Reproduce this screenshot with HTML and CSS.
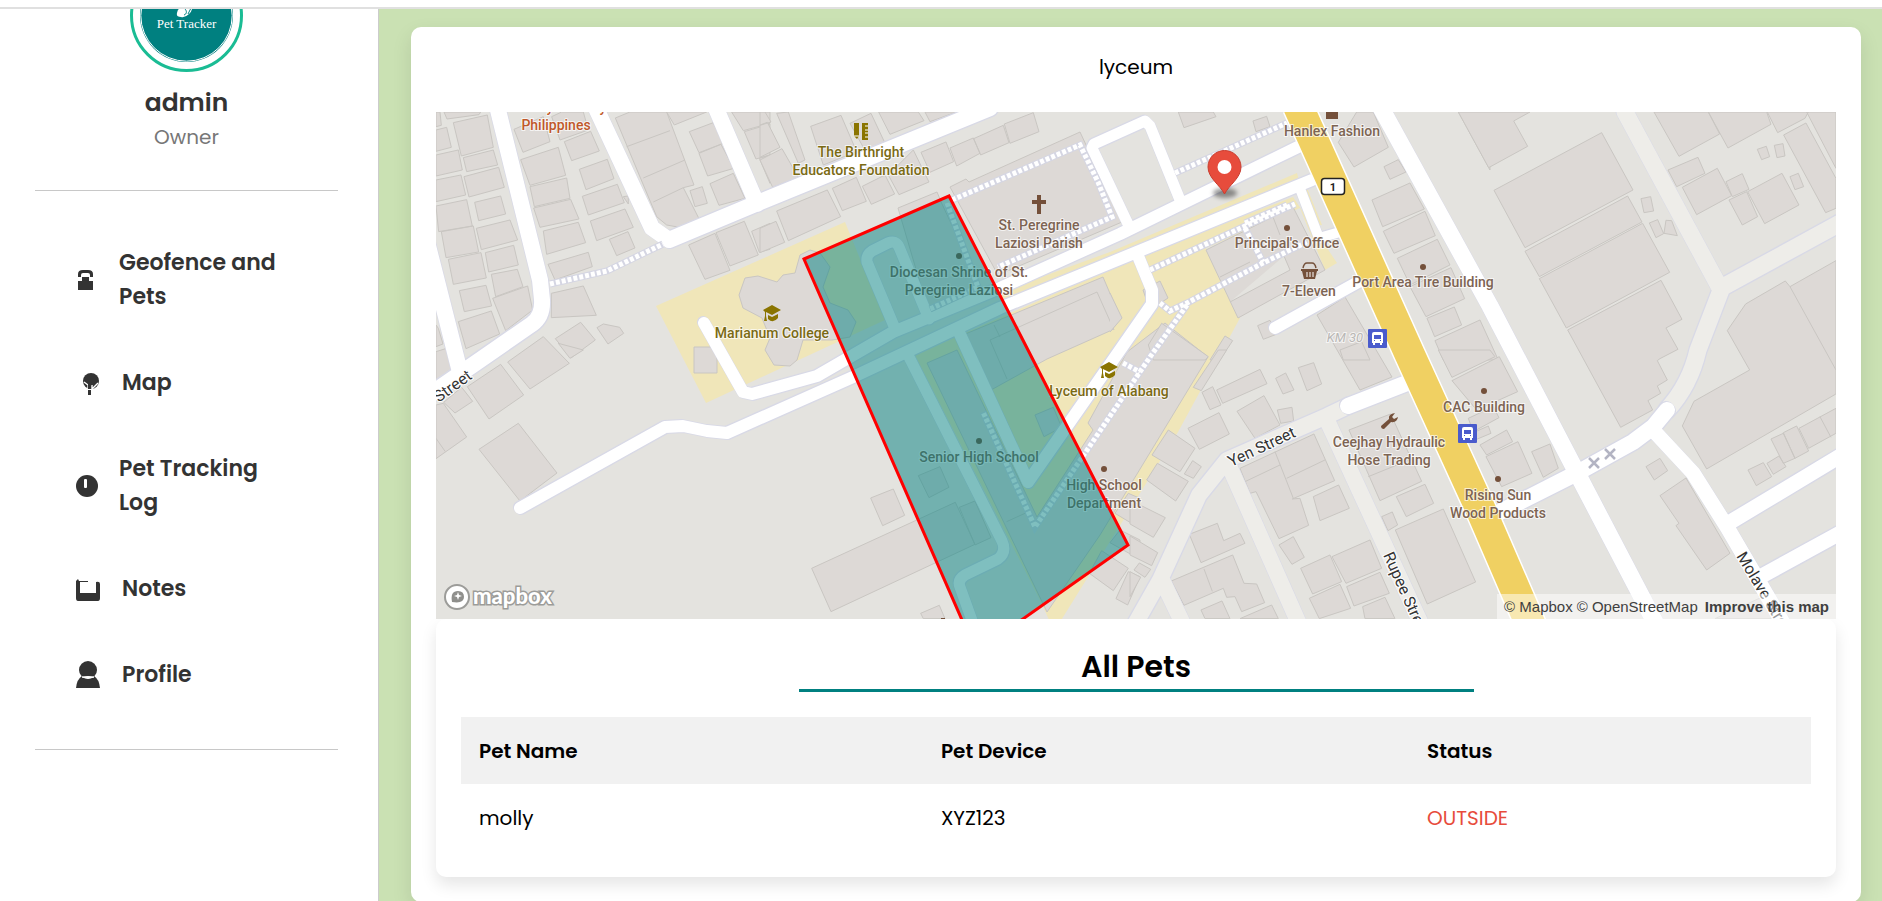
FILE: index.html
```html
<!DOCTYPE html>
<html lang="en">

<head>
  <title>Pet Tracker</title>

  <meta charset="UTF-8">
  <meta name="viewport" content="width=device-width, initial-scale=1">

  <link rel="stylesheet" href="styles.css">
</head>
<body>

  <header class="topbar"></header>

  <div class="layout">

    <aside class="sidebar">
      <svg class="avatar" viewBox="0 50 113 63" role="img" aria-label="Pet Tracker">
        <circle cx="56.5" cy="56.5" r="55" fill="#fff" stroke="#1abc94" stroke-width="3"/>
        <circle cx="56.5" cy="56.5" r="46.5" fill="#008080"/>
        <circle cx="56.5" cy="56.5" r="45.7" fill="none" stroke="#fff"/>
        <path d="M47 54q1-5 4-5l3-4h8q1 7-3 10-4 4-8 3-5 0-4-4z" fill="#fff"/>
        <path d="M54 56c3-1 3-4 1-6M58 55l3-6" fill="none" stroke="#008080"/>
        <text x="56.5" y="69" text-anchor="middle" class="avatar-text">Pet Tracker</text>
      </svg>
      <h2 class="user-name">admin</h2>
      <p class="user-role">Owner</p>

      <hr>

      <nav class="menu">
        <a href="#geofence" class="two-line">
          <svg viewBox="0 0 24 28"><path d="M2 11V8q0-4 5-4h5q5 0 5 4v3h-3V9q0-2-2-2H7Q5 7 5 9v2zM6 11h7v4h4v9H2v-9h4z"/></svg>
          <span>Geofence and Pets</span>
        </a>
        <a href="#map">
          <svg viewBox="0 0 24 28"><circle cx="15" cy="12" r="8"/><path d="M8 13l4 3v4M22 14l-4 4-2 2v-4" fill="none" stroke="#fff" stroke-width="1.4"/><path d="M12 13h4l-1 4v3h-3zM12 21h3v5h-3z"/></svg>
          <span>Map</span>
        </a>
        <a href="#log" class="two-line">
          <svg viewBox="0 0 24 28"><circle cx="11" cy="14" r="11"/><rect x="8" y="7" width="3" height="9" rx="1" fill="#fff"/></svg>
          <span>Pet Tracking Log</span>
        </a>
        <a href="#notes">
          <svg viewBox="0 0 24 28"><path d="M0 6l2-2 1 2h9v1H4v11h16V7q4-1 4 2v14q0 3-2 3H2q-2 0-2-3z"/></svg>
          <span>Notes</span>
        </a>
        <a href="#profile">
          <svg viewBox="0 0 24 28"><circle cx="12" cy="9" r="9"/><path d="M0 27q1-9 6-12h12q5 3 6 12z"/><path d="M6 16q6 3 12 0q-6-1-12 0" fill="#fff" stroke="#fff"/></svg>
          <span>Profile</span>
        </a>
      </nav>

      <hr>
    </aside>

    <main class="content">
      <section class="card">
        <p class="fence-name">lyceum</p>

        <div class="map">
          <svg class="map-canvas" viewBox="436 112 1400 507" preserveAspectRatio="xMidYMid slice">
            <defs>
              <g id="pale">
                <path d="M1625 112L1721 290L1698 350Q1690 385 1667 410M1721 288L1842 222" stroke-width="17"/>
                <path d="M1350 405L1327 416L1227 460L1199 495L1160 580L1134 626M1230 468L1300 626M1326 418L1422 626M1162 580L1184 626" stroke-width="16"/>
              </g>
              <g id="streets">
                <path d="M497 106L540 280L542 300Q543 316 532 324L428 396M424 230L460 372" stroke-width="16"/>
                <path d="M595 106L652 228L669 240L760 202L990 108M715 106L757 204" stroke-width="16"/>
                <path d="M704 323L743 392L752 394L817 376L893 332L1000 288L1120 234L1300 146" stroke-width="12"/>
                <path d="M520 508L665 427L683 426L707 431L727 433L853 377L1000 308L1110 263L1312 180" stroke-width="12"/>
                <path d="M896 331L867 262Q866 255 872 251L888 243Q896 240 899 247L929 319" stroke-width="11"/>
                <path d="M907 353L1002 541Q1007 552 998 559L965 575Q957 580 960 587L974 626" stroke-width="11"/>
                <path d="M958 330L1028 482L1120 350L1152 304V290L1138 256" stroke-width="12"/>
                <path d="M1128 224L1092 148L1094 144L1145 121L1150 126L1180 200" stroke-width="11"/>
                <path d="M1299 186L1319 238L1340 232" stroke-width="10"/>
                <path d="M1275 328L1360 281" stroke-width="12"/>
                <path d="M1348 406L1407 383" stroke-width="16"/>
                <path d="M1380 106L1490 306L1577 473L1658 628" stroke-width="17"/>
                <path d="M1500 512L1577 473L1633 442L1653 427L1667 410" stroke-width="16"/>
                <path d="M1653 430L1693 473L1727 527L1786 628M1727 524L1842 455M1758 578L1842 532" stroke-width="15"/>
              </g>
              <g id="footways">
                <path d="M550 284L607 271L663 244"/>
                <path d="M952 200L1080 145L1098 182L1112 217L998 267M947 203L978 287L930 309"/>
                <path d="M1175 173L1287 123"/>
                <path d="M1150 270L1243 227L1295 204M1245 223L1287 205M1245 228L1263 262"/>
                <path d="M1160 303L1170 311L1187 303L1263 263L1307 242"/>
                <path d="M1187 305L1150 357L1035 527L983 412M1123 363L1140 372"/>
              </g>
              <g id="cap" fill="#8a7400">
                <path d="M0 5L9 0l9 5-9 5-6-3v4l1 5H1l1-5V7z"/>
                <path d="M5 10l4 2 6-3v4q-5 6-10 1z"/>
              </g>
              <g id="bus">
                <rect width="19" height="19" rx="1" fill="#4a5bcc"/>
                <path d="M4 5q0-2 2-2h7q2 0 2 2v9h-1v2h-2v-2H7v2H5v-2H4z" fill="#fff"/>
                <path d="M6 6h7v4H6zM6 11h1v1H6zM12 11h1v1h-1z" fill="#4a5bcc"/>
              </g>
            </defs>

            <rect x="436" y="112" width="1400" height="507" fill="#e4e3df"/>

            <!-- school grounds -->
            <g fill="#f0e6b9">
              <path d="M656 306L845 222L885 320L706 403z"/>
              <path d="M1000 292L1110 252L1297 173L1299 181L1000 306z"/>
              <path d="M915 355L1143 255L1293 197L1337 263L1325 270L1300 208L1206 248L1240 318L1178 432L1060 622H1050L1040 600z"/>
              <path d="M1303 190L1307 188L1322 225H1318z"/>
            </g>

            <!-- buildings -->
            <g class="buildings">
              <path d="M745 278L758 276L777 282L783 275L795 273L800 255L810 250L820 253L830 267L823 287L830 303L848 310L856 322L850 337L832 340H803L797 360L790 366L774 365L765 350L770 338L762 318L743 308L739 295z"/>
              <path d="M694 347H717V373H694z"/>
              <path d="M898 208L937 192L942 204L980 285L928 310z"/>
              <path d="M950 187L966 179L969 182L1080 132L1122 222L998 275z"/>
              <path d="M963 335L1103 277L1120 317L1112 330L1047 359L991 390zM990 340L1097 292L1114 330M990 340L1007 379M994 325L1000 337"/>
              <path d="M927 363L957 350L1037 517L1093 430L1088 423L1127 352L1165 323L1208 357L1100 535L1047 612z"/>
              <path d="M1206 250L1293 207L1325 270L1238 318zM1220 277L1250 262M1230 302L1290 270L1284 256M1273 217L1280 235"/>
              <path d="M1110 293L1122 318L1110 332M1143 290L1160 281L1168 298L1150 310z"/>
              <path d="M1317 315L1345 297L1392 377L1360 390z"/>
            </g>
            <g class="buildings" transform="translate(410 90) scale(.3333)">
              <path d="M78 66h12l4 40-16 4zM102 66h110l-5 8-96 13zM130 98L232 75L250 172L154 198zM78 120L110 112L124 172L78 184zM78 195L145 180L157 240L78 258zM160 203L250 180L263 225L170 245zM78 270L153 255L167 315L78 335z"/>
              <path d="M162 260L266 232L283 292L177 321zM194 337L272 318L287 372L206 392zM78 348L170 329L187 408L86 425zM94 425L190 408L206 486L108 503zM199 415L300 390L323 450L214 479zM226 488L311 466L325 525L236 546zM115 508L213 488L229 564L130 583z"/>
              <path d="M244 553L322 538L339 590L257 620zM248 625L353 588L368 660L287 722zM148 602L228 586L245 648L163 665zM145 695L244 663L269 732L168 776zM78 705L85 715L99 762L78 770z"/>
              <path d="M312 118L400 80L420 155L339 187zM332 209L445 172L467 256L360 286zM360 290L470 264L480 325L373 350zM371 354L482 328L507 387L390 412zM400 423L505 397L527 458L410 493zM414 523L535 487L547 530L435 570z"/>
              <path d="M425 80L450 150L535 120L520 66H455zM463 155L542 124L568 183L485 212zM508 238L592 208L612 266L528 299zM517 319L622 283L643 338L535 375zM541 393L645 357L670 412L560 452zM598 448L654 425L675 474L620 497zM640 320L655 318V342z"/>
              <path d="M616 84L660 66H770L852 285L820 293L867 386L808 412L770 405L740 380zM650 170L780 122M700 264L825 210M730 336L820 293"/>
              <path d="M770 66H890L793 105zM838 125L910 98L940 160L867 188zM867 190L933 163L972 235L893 258zM900 281L970 250L1005 325L927 346zM840 302L877 290L892 340L855 350z"/>
              <path d="M965 66H1080V100L1000 122zM1003 125L1080 102V195L1038 207zM1048 205L1080 195V280zM836 465L915 430L960 541L885 568zM918 428L1003 394L1045 495L960 528zM1025 424L1080 400V478L1048 487z"/>
              <path d="M424 610L520 588L559 676L424 683zM436 746L512 697L556 750L483 804zM561 713L580 702L629 712L641 730L594 762z"/>
            </g>
            <g class="buildings" transform="translate(410 350) scale(.3333)">
              <path d="M293 36L400 -40L478 40L360 117zM445 -20L480 25L520 0zM172 110L272 43L341 135L237 207zM101 157L155 112L188 154L135 189zM78 165L100 160L170 261L78 326zM78 265L106 305M207 298L325 220L441 369L330 453zM78 5L110 -5L125 62L78 90z"/>
            </g>
            <g class="buildings" transform="translate(760 90) scale(.3333)">
              <path d="M0 66h15l18 30-33 10zM0 105l22-8 38 75-60 30zM0 210L66 176L115 262L38 292zM50 70L85 66L135 210L115 220zM152 109L243 76L290 185L190 225zM270 100L333 70L380 170L320 190zM356 66H475L492 92L390 133zM495 66H590L510 95z"/>
              <path d="M50 363L202 300L242 380L85 452zM0 415L48 394L74 457L0 488zM217 295L289 262L319 334L247 362zM307 289L375 255L404 312L334 343zM385 255L460 180L507 276L417 314zM483 187L558 156L581 215L510 247zM570 174L640 144L660 190L590 228zM641 146L730 106L747 158L662 195zM733 102L820 68L837 125L750 160z"/>
            </g>
            <g class="buildings" transform="translate(760 350) scale(.3333)">
              <path d="M332 444L400 417L434 496L368 527zM155 655L586 457L645 583L213 785zM598 472L645 453L693 563L645 585zM475 377L540 350L567 412L507 443zM482 790L538 766L555 806H490zM825 195L880 172L905 232L852 260zM1105 430L1065 490L1140 535V445zM1080 540L1050 578L1140 628V570zM1025 602L988 670L1060 722L1105 655zM1105 665L1068 746L1103 765L1140 680zM740 515L795 490"/>
            </g>
            <g class="buildings" transform="translate(1110 90) scale(.3333)">
              <path d="M205 66H310L318 80L222 113zM429 93L470 79L480 110L438 125zM685 157L740 66H790L835 172L732 231zM822 230L865 209L888 246L840 268zM786 330L900 279L943 357L818 410zM820 424L945 364L976 437L852 490zM862 505L982 448L1020 525L900 585zM900 590L1023 533L1064 626L948 680zM951 685L1033 651L1055 705L974 740z"/>
              <path d="M975 752L1110 690L1165 810H1000zM1045 66H1140V240zM443 707L480 691L499 733L460 748zM690 780L755 755L780 810H700zM115 765L155 700L295 800L285 810H130zM300 810L345 738L368 752L330 810z"/>
            </g>
            <g class="buildings" transform="translate(1130 350) scale(.3333)">
              <path d="M190 112L265 0H290L214 122zM216 127L248 110L273 165L240 179zM260 120L390 58L411 101L278 160zM437 85L467 69L492 120L459 132zM505 53L551 38L575 102L531 122zM321 184L402 137L450 225L375 265zM442 180L486 172L491 213L452 220zM174 235L267 188L298 252L208 298z"/>
              <path d="M66 315L115 240L195 295L150 365zM50 390L82 340L175 394L137 453zM163 372L188 332L214 350L190 385zM0 450L106 503L70 562L0 522zM0 558L83 608L65 647L0 615zM12 660L28 639L62 658L45 682zM0 665L32 682L0 740z"/>
              <path d="M330 355L552 252L614 392L487 447L510 445L536 526L447 566L378 425L360 430zM345 395L450 345M435 305L490 445M470 385L585 330M550 440L626 405L658 475L570 512zM447 585L490 560L523 622L486 643z"/>
              <path d="M178 553L262 520L281 572L330 550L345 580L213 638zM124 693L308 615L342 700L380 702L404 758L335 785L315 740L290 742L280 715L162 766zM222 657L247 724M213 780L276 753L300 806H225zM330 806L425 765L445 806z"/>
              <path d="M512 655L600 615L635 695L548 732zM606 620L720 570L755 655L648 700zM538 745L630 703L662 775L568 806zM650 710L750 667L778 730L672 768zM698 770L765 742L795 806H705zM657 240L782 192L875 394L750 452zM715 380L850 325M799 440L885 403L911 460L829 500zM755 500L787 486L803 525L774 542zM796 540L940 477L1037 696L892 762z"/>
              <path d="M925 0H1080L1095 20L966 82zM966 92L1108 20L1163 125L1040 180zM1015 205L1090 170L1107 203L1030 245zM1030 248L1075 228L1083 250L1040 268zM1050 285L1130 240L1148 275L1070 315zM1068 320L1164 275L1206 370L1115 410zM1205 305L1260 282L1285 355L1240 382z"/>
            </g>
            <g class="buildings" transform="translate(1480 90) scale(.3333)">
              <path d="M-65 66H150L101 93L143 169L26 233zM42 301L365 128L459 300L135 473zM135 484L443 318L486 396L178 560zM178 566L488 400L569 547L259 714zM263 720L543 571L606 688L558 714L594 778L540 806L532 812L562 870L532 888L542 910L504 932L518 960L422 1012z"/>
              <path d="M522 66H685L719 132L597 199zM685 66H860L873 103L744 174zM862 66H985L975 85L893 128zM980 66H1068V235zM911 135L978 99L1068 265V355L1037 368zM564 240L654 202L675 250L590 290zM607 292L712 235L755 317L650 374zM738 275L787 251L807 298L757 320zM747 330L800 305L833 380L787 405zM803 305L906 250L957 345L854 401z"/>
              <path d="M832 178L859 169L869 200L845 209zM883 166L909 161L915 198L891 203zM930 260L955 250L971 290L945 299zM483 326L512 320L521 363L492 368zM508 399L533 389L551 431L528 443zM558 391L575 392L592 437L552 430z"/>
              <path d="M797 642L916 573L930 590L1068 512V912L680 1137L607 1008L642 934L809 840L742 722zM930 590L1068 840"/>
            </g>
            <g class="buildings" transform="translate(1480 350) scale(.3333)">
              <path d="M498 350L540 325L563 362L523 390zM540 437L618 384L750 610L680 660L588 527L597 520zM804 360L850 338L875 380L829 407zM861 340L897 318L918 350L880 373zM873 267L910 250L945 325L910 340zM910 248L950 228L986 303L945 325zM957 235L1068 175V250L986 295zM1020 200L1053 262M705 806L860 735L890 806z"/>
            </g>

            <use href="#pale" class="line casing"/>
            <use href="#pale" class="line pale"/>
            <use href="#streets" class="line casing"/>
            <use href="#streets" class="line street"/>
            <use href="#footways" class="footway-casing"/>
            <use href="#footways" class="footway"/>

            <path d="M1298 106L1410 355L1480 508L1532 628" fill="none" stroke="#fff" stroke-width="33"/>
            <path d="M1298 106L1410 355L1480 508L1532 628" fill="none" stroke="#f0d062" stroke-width="30"/>

            <!-- places -->
            <g class="label food">
              <text x="550" y="112">y</text>
              <text x="603" y="112">y</text>
              <text x="556" y="130">Philippines</text>
            </g>
            <g class="label school">
              <text x="861" y="157">The Birthright</text>
              <text x="861" y="175">Educators Foundation</text>
              <text x="772" y="338">Marianum College</text>
              <text x="1109" y="396">Lyceum of Alabang</text>
            </g>
            <g class="label place">
              <text x="1039" y="230">St. Peregrine</text>
              <text x="1039" y="248">Laziosi Parish</text>
              <text x="959" y="277">Diocesan Shrine of St.</text>
              <text x="959" y="295">Peregrine Laziosi</text>
              <text x="979" y="462">Senior High School</text>
              <text x="1104" y="490">High School</text>
              <text x="1104" y="508">Department</text>
              <text x="1332" y="136">Hanlex Fashion</text>
              <text x="1287" y="248">Principal's Office</text>
              <text x="1309" y="296">7-Eleven</text>
              <text x="1423" y="287">Port Area Tire Building</text>
              <text x="1484" y="412">CAC Building</text>
              <text x="1389" y="447">Ceejhay Hydraulic</text>
              <text x="1389" y="465">Hose Trading</text>
              <text x="1498" y="500">Rising Sun</text>
              <text x="1498" y="518">Wood Products</text>
            </g>
            <text class="label km" x="1345" y="342">KM 30</text>
            <g class="street-name">
              <text transform="translate(473 378) rotate(-36)" text-anchor="end">Street</text>
              <text transform="translate(1231 467) rotate(-25)">Yen Street</text>
              <text transform="translate(1383 555) rotate(66)">Rupee Street</text>
              <text transform="translate(1736 556) rotate(59)">Molave Street</text>
            </g>
            <g class="dots">
              <circle cx="959" cy="256" r="3"/><circle cx="979" cy="441" r="3"/><circle cx="1104" cy="469" r="3"/>
              <circle cx="1287" cy="228" r="3"/><circle cx="1423" cy="267" r="3"/><circle cx="1484" cy="391" r="3"/>
              <circle cx="1498" cy="479" r="3"/>
              <rect x="1326" y="112" width="12" height="7"/>
              <path d="M1037 195h4v5h5v4h-5v10h-4v-10h-5v-4h5z"/>
              <path d="M1301 269h17v2h-1l-2 8h-11l-2-8h-1zM941 618h4v2h-4z"/>
              <path d="M1303 268q1-5 4-5h5q3 0 4 5" fill="none" stroke="#74503a" stroke-width="1.5"/>
              <path d="M1307 272v5M1310 272v5M1313 272v5" fill="none" stroke="#fff"/>
              <path d="M1381 426l8-7q-1-5 6-6l-3 4 2 2 4-2q-1 6-7 5l-7 7q-3 0-3-3z"/>
            </g>
            <use href="#cap" x="763" y="305"/>
            <use href="#cap" x="1100" y="362"/>
            <path d="M854 123h5v13l-2 3-3-3zM862 123h6v17h-6z" fill="#8a7400"/>
            <path d="M854 136h5M865 126h3M865 130h3M865 133h3M865 137h3" stroke="#fff"/>
            <use href="#bus" x="1368" y="329"/>
            <use href="#bus" x="1458" y="424"/>
            <rect x="1321.5" y="178.5" width="23" height="16" rx="3" fill="#fff" stroke="#222" stroke-width="1.5"/>
            <text x="1333" y="191" class="shield">1</text>
            <path d="M1589 458l10 10M1599 458l-10 10M1605 449l10 10M1615 449l-10 10" stroke="#b3b4c3" stroke-width="2.5"/>

            <path class="geofence" d="M804 259L949 196L1128 545L976 652z"/>

            <!-- pet marker -->
            <ellipse cx="1225" cy="193" rx="12" ry="5" class="marker-shadow"/>
            <path d="M1224.500 194C1220 185 1208 178 1208 167a16.500 16.500 0 0 1 33 0c0 11-12 18-16.500 27z" fill="#e74c3c" stroke="#c93e30"/>
            <circle cx="1224.500" cy="167" r="7" fill="#fff"/>
          </svg>

          <a class="map-logo" href="#mapbox" aria-label="Mapbox">
            <svg viewBox="0 0 112 28">
              <circle cx="13" cy="14" r="12" fill="#fff" stroke="#9c9c99" stroke-width="2"/>
              <path d="M8 19q-2-11 6-11 6 0 6 6 0 7-12 5z" fill="#8f8f8c"/>
              <path d="M14 9l1 3 3 1-3 1-1 3-1-3-3-1 3-1z" fill="#fff"/>
              <text x="29" y="21">mapbox</text>
            </svg>
          </a>
          <div class="map-credit">
            <a href="#mapbox-about">© Mapbox</a>
            <a href="#osm">© OpenStreetMap</a>
            <a href="#improve" class="improve">Improve this map</a>
          </div>
        </div>

        <div class="pets">
          <h2>All Pets</h2>
          <table>
            <thead>
              <tr>
                <th>Pet Name</th>
                <th>Pet Device</th>
                <th>Status</th>
              </tr>
            </thead>
            <tbody>
              <tr>
                <td>molly</td>
                <td>XYZ123</td>
                <td class="outside">OUTSIDE</td>
              </tr>
            </tbody>
          </table>
        </div>
      </section>
    </main>

  </div>

</body>
</html>
```

FILE: styles.css
```css
* {
  box-sizing: border-box;
  margin: 0;
  padding: 0;
}

body {
  height: 100vh;
  overflow: hidden;
  display: flex;
  flex-direction: column;
  font-family: Poppins, Inter, sans-serif;
  font-size: 20px;
  color: #000;
  background: #cae1b3;
}

a {
  color: inherit;
  text-decoration: none;
}

.topbar {
  flex: none;
  height: 9px;
  background: #fff;
  border-bottom: 2px solid #e0e0e0;
}

.layout {
  flex: 1;
  min-height: 0;
  display: flex;
}

/* sidebar */
.sidebar {
  flex: none;
  width: 379px;
  padding: 0 40px 0 35px;
  background: #fff;
  border-right: 1px solid #ccc;
  text-align: center;
  color: #333;
}

.avatar {
  display: block;
  width: 113px;
  height: 63px;
  margin: 0 auto 14px;
}

.avatar-text {
  font: 13px "Liberation Serif", serif;
  fill: #fff;
}

.user-name {
  font-size: 25px;
  font-weight: 600;
  line-height: 34px;
}

.user-role {
  font-size: 20px;
  line-height: 34px;
  color: #777;
}

.sidebar hr {
  border: none;
  border-top: 1px solid #c8c8c8;
}

.user-role + hr {
  margin-top: 36px;
}

.menu {
  display: flex;
  flex-direction: column;
  gap: 52px;
  padding: 55px 35px 57px 41px;
  text-align: left;
}

.menu a {
  display: flex;
  align-items: center;
  gap: 22px;
  font-size: 22px;
  font-weight: 600;
  line-height: 34px;
}

.menu .two-line {
  gap: 19px;
}

.menu .two-line span {
  max-width: 178px;
}

.menu svg {
  flex: none;
  width: 24px;
  height: 28px;
  fill: #333;
}

/* content */
.content {
  flex: 1;
  min-width: 0;
  padding: 18px 21px 0 32px;
}

.card {
  padding: 25px;
  background: #fff;
  border-radius: 10px;
  box-shadow: 0 8px 20px rgba(0, 0, 0, 0.1);
}

.fence-name {
  margin-bottom: 30px;
  line-height: 30px;
  text-align: center;
}

/* map */
.map {
  position: relative;
  height: 507px;
  overflow: hidden;
}

.map-canvas {
  display: block;
  width: 100%;
  height: 100%;
}

.buildings {
  fill: #ddd9d6;
  stroke: #c9c6c2;
}

.buildings path {
  vector-effect: non-scaling-stroke;
}

.line {
  fill: none;
  stroke-linecap: round;
  stroke-linejoin: round;
}

/* thin outline around the roads */
.casing {
  stroke: #d8d9e6;
  filter: drop-shadow(1px 1px 0 #d8d9e6) drop-shadow(-1px -1px 0 #d8d9e6);
}

.pale {
  stroke: #eeede9;
}

.street {
  stroke: #fff;
}

.footway-casing,
.footway {
  fill: none;
  stroke: #d5d6e3;
  stroke-width: 7;
}

.footway {
  stroke: #fff;
  stroke-width: 5;
  stroke-dasharray: 4 2;
}

.label {
  font: 500 14px Roboto, sans-serif;
  text-anchor: middle;
  paint-order: stroke;
  stroke: rgba(255, 255, 255, 0.7);
  stroke-width: 2px;
}

.food {
  fill: #c0582a;
}

.school {
  fill: #7a6a14;
}

.place {
  fill: #7d6453;
}

.km {
  font-size: 13px;
  font-style: italic;
  font-weight: 400;
  fill: #b9b7b5;
}

.street-name {
  font: 16px Roboto, sans-serif;
  fill: #333;
  paint-order: stroke;
  stroke: #fff;
  stroke-width: 2px;
}

.dots {
  fill: #74503a;
}

.shield {
  font: bold 11px Roboto, sans-serif;
  text-anchor: middle;
  fill: #222;
}

.geofence {
  fill: rgba(0, 128, 128, 0.5);
  stroke: #f00;
  stroke-width: 3;
}

.marker-shadow {
  fill: rgba(0, 0, 0, 0.4);
  filter: blur(2px);
}

.map-logo {
  position: absolute;
  left: 8px;
  bottom: 8px;
}

.map-logo svg {
  display: block;
  width: 112px;
  height: 28px;
}

.map-logo text {
  font: 900 22px Lato, sans-serif;
  fill: #fff;
  stroke: #9c9c99;
  stroke-width: 3px;
  paint-order: stroke;
}

.map-credit {
  position: absolute;
  right: 0;
  bottom: 0;
  display: flex;
  gap: 4px;
  padding: 0 7px;
  background: rgba(255, 255, 255, 0.5);
  font-family: "Liberation Sans", Arial, sans-serif;
  font-size: 15px;
  line-height: 25px;
  color: #404040;
}

.improve {
  margin-left: 3px;
  font-weight: bold;
}

/* pets table */
.pets {
  padding: 25px;
  border-radius: 10px;
  box-shadow: 0 8px 16px rgba(0, 0, 0, 0.1);
}

.pets h2 {
  width: 50%;
  margin: 0 auto 25px;
  border-bottom: 3px solid #008080;
  font-size: 30px;
  font-weight: 600;
  line-height: 45px;
  text-align: center;
}

table {
  width: 100%;
  border-collapse: collapse;
}

th,
td {
  height: 67px;
  padding: 0 18px;
  text-align: left;
}

td {
  height: 68px;
}

th {
  font-weight: 600;
  background: #f1f1f1;
}

.outside {
  color: #e74c3c;
}
```
